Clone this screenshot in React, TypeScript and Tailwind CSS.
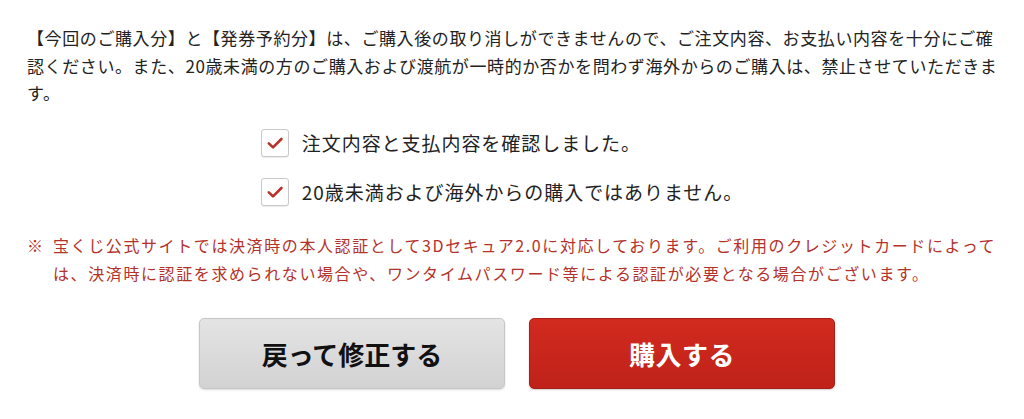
import React from 'react';

const jp = { fontFamily: '"Hiragino Sans", "Noto Sans CJK JP", sans-serif' };

const CheckRow: React.FC<{ label: string }> = ({ label }) => (
  <label className="flex items-center gap-[13px]">
    <span className="flex h-[28px] w-[28px] items-center justify-center rounded-[3px] border border-[#c9c9c9] bg-white shadow-[0_1px_1px_rgba(0,0,0,0.08)]">
      <svg viewBox="0 0 20 20" className="h-[20px] w-[20px]" fill="none">
        <path d="M3.8 10.4 L8 14.4 L16.4 6" stroke="#b8302a" strokeWidth="2.6" strokeLinecap="round" strokeLinejoin="round" />
      </svg>
    </span>
    <span className="text-[19px] leading-[28px] tracking-[0.05em] text-[#222]">{label}</span>
  </label>
);

export default function App() {
  return (
    <div className="min-h-screen bg-white pl-[27px] pr-[17px] pt-[24px] text-[#222]" style={jp}>
      {/* Notice */}
      <p className="text-[17px] leading-[27.5px] tracking-[0.6px]">
        【今回のご購入分】と【発券予約分】は、ご購入後の取り消しができませんので、ご注文内容、お支払い内容を十分にご確認ください。また、20歳未満の方のご購入および渡航が一時的か否かを問わず海外からのご購入は、禁止させていただきます。
      </p>

      {/* Agreements */}
      <div className="mt-[22px] flex justify-center">
        <div className="flex flex-col gap-[21px] pr-[30px]">
          <CheckRow label="注文内容と支払内容を確認しました。" />
          <CheckRow label="20歳未満および海外からの購入ではありません。" />
        </div>
      </div>

      {/* 3D Secure note */}
      <div className="mt-[25px] flex text-[16px] leading-[28px] tracking-[1.6px] text-[#b3322a]">
        <span className="w-[26px] shrink-0">※</span>
        <p>
          宝くじ公式サイトでは決済時の本人認証として3Dセキュア2.0に対応しております。ご利用のクレジットカードによっては、決済時に認証を求められない場合や、ワンタイムパスワード等による認証が必要となる場合がございます。
        </p>
      </div>

      {/* Buttons */}
      <div className="mt-[31px] flex justify-center gap-[24px]">
        <button className="flex h-[71px] w-[306px] items-center justify-center rounded-[5px] border border-[#c6c6c6] bg-gradient-to-b from-[#e4e4e4] to-[#d2d2d2] text-[26px] font-bold text-[#111] shadow-[0_1px_2px_rgba(0,0,0,0.15)]">
          戻って修正する
        </button>
        <button className="flex h-[71px] w-[306px] items-center justify-center rounded-[5px] border border-[#a91f17] bg-gradient-to-b from-[#d22a1f] to-[#bf2219] text-[26px] font-bold tracking-[0.02em] text-white shadow-[0_1px_2px_rgba(0,0,0,0.2)]">
          購入する
        </button>
      </div>
    </div>
  );
}
